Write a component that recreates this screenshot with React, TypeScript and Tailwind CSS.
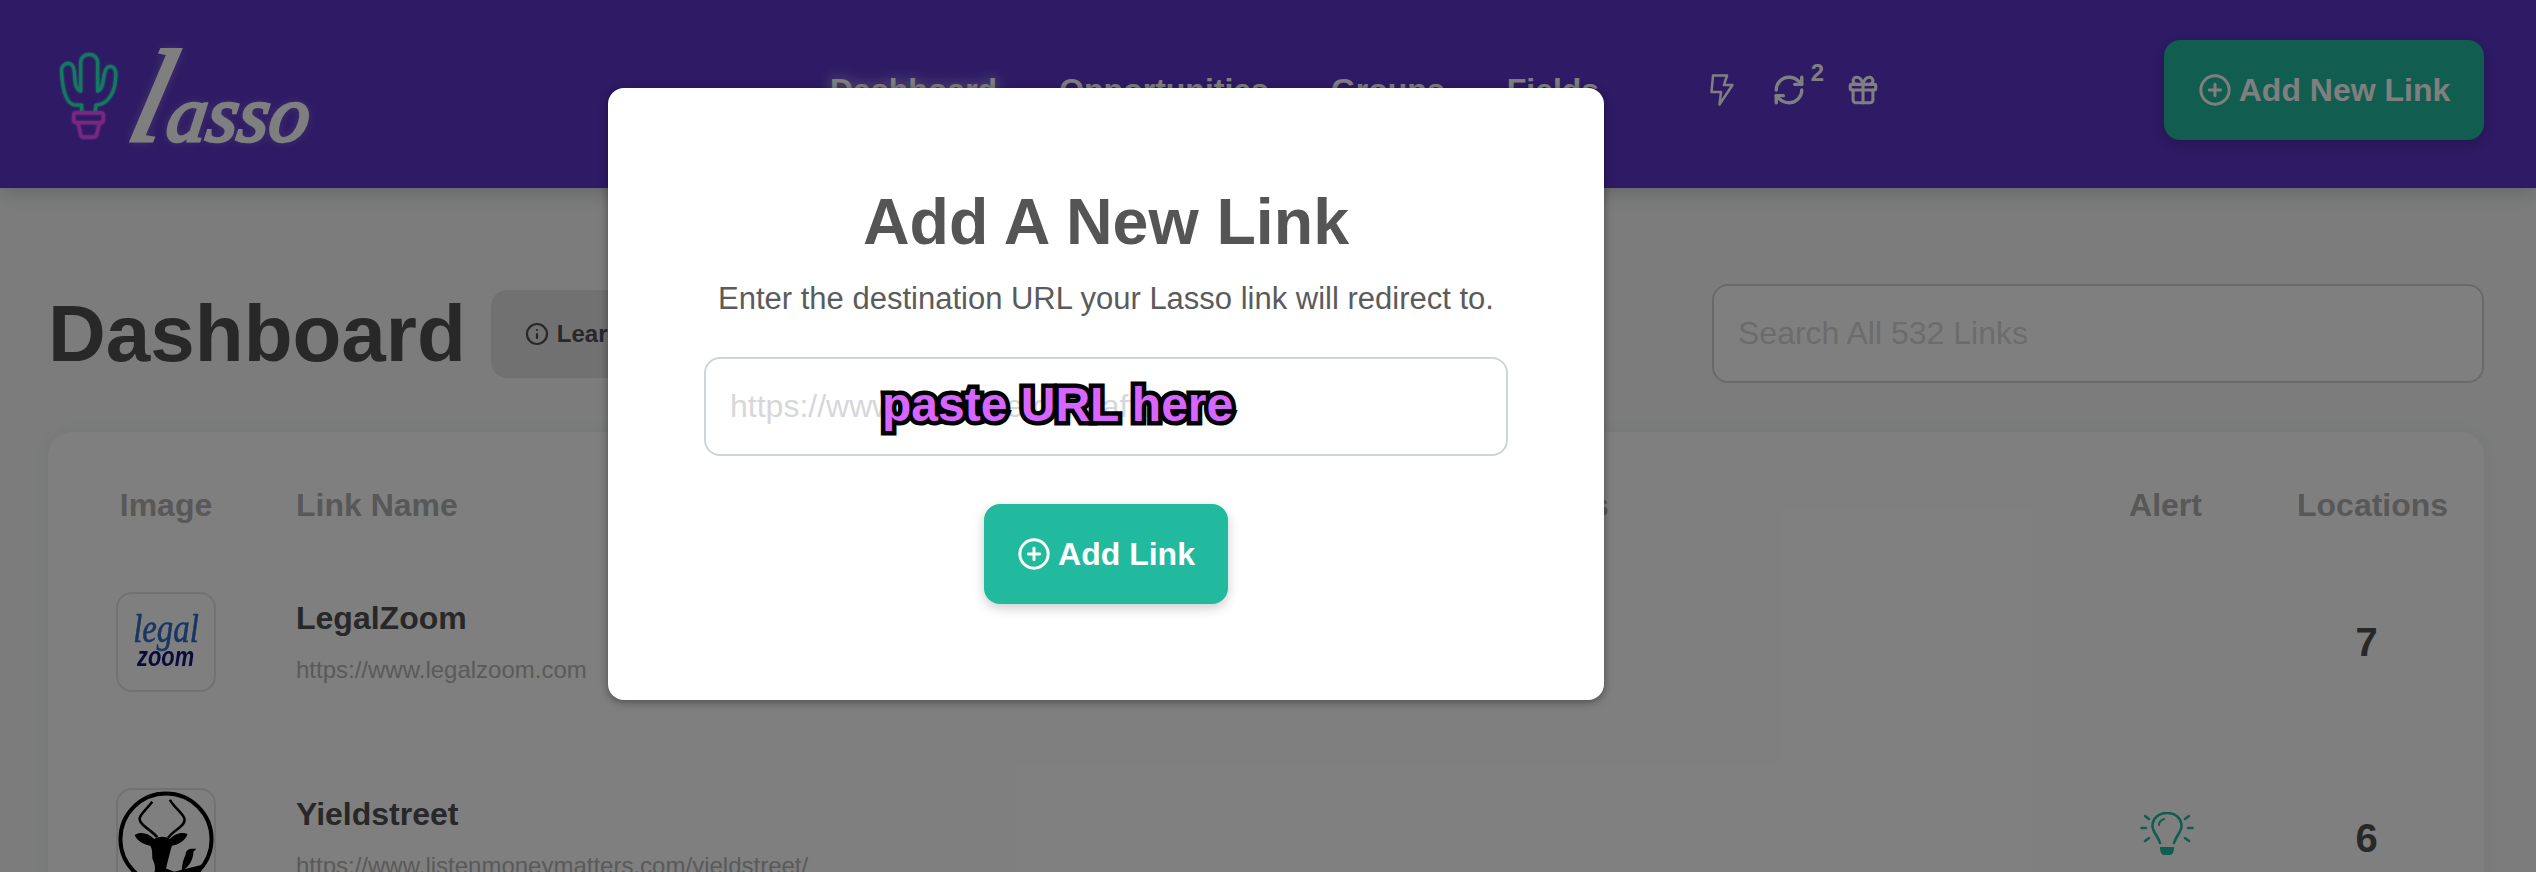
import { CirclePlus, Gift, Info, RefreshCw } from 'lucide-react'

const NAV_ITEMS = ['Dashboard', 'Opportunities', 'Groups', 'Fields']

function Cactus() {
  return (
    <svg width="60" height="90" viewBox="84 70 188 280" fill="none" strokeLinecap="round" strokeLinejoin="round" strokeWidth="10" className="shrink-0">
      <g className="drop-shadow-[0_0_4px_#2bf5c4]" stroke="#2bf0c0">
        <path d="M155 258 L155 235 L132 235 C108 230 95 190 92 130 C90 100 130 92 132 130 L135 165 C137 185 150 192 152 192 L152 102 C152 68 205 68 205 102 L205 192 C225 185 222 145 228 132 C235 105 262 110 262 140 C262 190 240 235 200 235 L197 258" />
      </g>
      <g className="drop-shadow-[0_0_4px_#f45cff]" stroke="#f050ff">
        <rect x="130" y="260" width="93" height="30" rx="7" />
        <path d="M143 290 L152 328 C153 335 155 336 162 336 L192 336 C198 336 200 335 202 328 L211 290" />
      </g>
    </svg>
  )
}

function Logo() {
  return (
    <div className="flex items-center w-[830px] pl-[59px] pt-[6px]">
      <Cactus />
      <div className="ml-[10px] flex items-baseline h-[100px] font-['Liberation_Serif',serif] italic text-white [text-shadow:0_0_10px_rgba(255,255,255,0.4)]">
        <span className="inline-block -skew-x-[14deg] translate-x-[6px] text-[132px] leading-[100px] [-webkit-text-stroke:3px_white]">l</span>
        <span className="inline-block -skew-x-[8deg] text-[80px] leading-[100px] ml-[2px] [-webkit-text-stroke:3px_white]">asso</span>
      </div>
    </div>
  )
}

function Bolt() {
  return (
    <svg width="24" height="32" viewBox="0 0 24 32" fill="none" stroke="white" strokeWidth="2.5" strokeLinejoin="round">
      <path d="M3 1.5 L17 1.5 L14 11 L22.5 11 L9.5 30.5 L11 18 L1.5 18 Z" />
    </svg>
  )
}

function Bulb() {
  return (
    <svg width="54" height="44" viewBox="0 0 54 44" fill="none" stroke="#22ba9f" strokeLinecap="round" strokeWidth="2.6" className="mb-2">
      <path d="M20 31 C18 24 12.5 20 12.5 14 C12.5 6 19 1 27 1 C35 1 41.5 6 41.5 14 C41.5 20 36 24 34 31" />
      <path d="M19 13 C19 10 21 8 24 7" strokeWidth="2" />
      <path d="M20 35 L34 35 C34 39 33 43 30 43 L24 43 C21 43 20 39 20 35 Z" fill="#22ba9f" stroke="none" />
      <path d="M5 4 L9 7" />
      <path d="M49 4 L45 7" />
      <path d="M1.5 16 L6 16" />
      <path d="M48 16 L52.5 16" />
      <path d="M5 29 L9 26" />
      <path d="M49 29 L45 26" />
    </svg>
  )
}

function LegalZoomLogo() {
  return (
    <div className="flex flex-col items-center pt-[18px]">
      <span className="font-['Liberation_Serif',serif] italic text-[#2f6fc4] text-[40px] leading-[34px] scale-x-[0.82] [-webkit-text-stroke:0.6px_#2f6fc4]">legal</span>
      <span className="italic font-bold text-[#14147a] text-[28px] leading-[20px] mt-[1px] scale-x-[0.78]">zoom</span>
    </div>
  )
}

function AntelopeLogo() {
  return (
    <svg width="100" height="100" viewBox="0 0 100 100" className="-m-px">
      <circle cx="50" cy="50" r="46.5" fill="none" stroke="black" strokeWidth="4" />
      <path d="M36 12 C30 20 24 24 23 29 C23 36 34 40 41 48" fill="none" stroke="black" strokeWidth="2.6" />
      <path d="M54 10 C58 18 68 24 69 30 C69 38 58 40 52 49" fill="none" stroke="black" strokeWidth="2.6" />
      <path d="M18 46 C24 42 32 44 38 50 C42 47 50 47 54 50 C58 45 66 42 72 45 C70 52 62 56 56 57 C54 64 52 72 50 80 L60 84 L38 84 C40 80 38 74 36 70 C36 64 36 60 34 57 C28 56 20 52 18 46 Z" fill="black" />
      <path d="M70 66 C70 62 73 60 77 60 L81 60 L78 63 C78 68 76 74 72 78 L66 84 C66 76 68 70 70 66 Z" fill="black" />
      <path d="M56 84 L88 76 L80 100 L50 100 Z" fill="black" />
    </svg>
  )
}

const ROWS = [
  { name: 'LegalZoom', url: 'https://www.legalzoom.com', locations: 7, alert: false, logo: <LegalZoomLogo /> },
  { name: 'Yieldstreet', url: 'https://www.listenmoneymatters.com/yieldstreet/', locations: 6, alert: true, logo: <AntelopeLogo /> },
]

export default function App() {
  return (
    <div className="relative h-[872px] overflow-hidden bg-[#f8f9fa] font-['Liberation_Sans',Arial,sans-serif]">
      {/* Header */}
      <header className="relative z-10 flex items-center h-[188px] pr-[52px] bg-[#5c35ca] shadow-[0_4px_20px_rgba(0,0,0,0.2)]">
        <Logo />
        <nav className="flex gap-[62px] text-[32px] leading-[37px] font-bold text-white -mt-[8px]">
          {NAV_ITEMS.map((item, i) => (
            <span key={item} className={i === 0 ? '[text-shadow:0_0_14px_rgba(255,255,255,0.8)]' : ''}>{item}</span>
          ))}
        </nav>
        <div className="flex items-center ml-[111px] -mt-[8px] text-white">
          <Bolt />
          <div className="relative ml-[38px]">
            <RefreshCw size={34} strokeWidth={2.4} />
            <span className="absolute -top-[14px] -right-[18px] text-[24px] leading-[28px] font-bold">2</span>
          </div>
          <Gift size={34} strokeWidth={2.2} className="ml-[40px]" />
        </div>
        <button className="ml-auto flex items-center gap-[7px] w-[320px] h-[100px] justify-center -mt-[8px] rounded-2xl bg-[#22ba9f] text-white text-[32px] font-bold shadow-[0_4px_12px_rgba(0,0,0,0.2)]">
          <CirclePlus size={34} strokeWidth={2.1} />
          Add New Link
        </button>
      </header>

      {/* Dashboard */}
      <main className="pl-[48px] pr-[52px]">
        <div className="flex items-center h-[99px] mt-[96px]">
          <h1 className="text-[80px] leading-[90px] font-bold text-[#505050]">Dashboard</h1>
          <button className="flex items-center gap-[8px] h-[88px] ml-[25px] px-[34px] rounded-2xl bg-[#e2e2e2] text-[#505050] text-[24px] font-bold">
            <Info size={24} strokeWidth={2.2} />
            Learn More
          </button>
          <input
            type="text"
            placeholder="Search All 532 Links"
            className="ml-auto w-[772px] h-[99px] px-[24px] rounded-2xl border-2 border-[#ced4da] bg-white text-[32px] placeholder:text-[#d8d8d8] outline-none"
          />
        </div>

        <section className="mt-[49px] pt-[55px] pl-[68px] pr-[38px] h-[600px] rounded-3xl bg-white shadow-[0_0_20px_rgba(0,0,0,0.06)]">
          <div className="grid grid-cols-[100px_1119px_114px_1fr_106px_149px] gap-x-20 text-[32px] leading-[37px] font-bold text-[#b0b0b0]">
            <span className="text-center">Image</span>
            <span>Link Name</span>
            <span>Groups</span>
            <span />
            <span className="text-center pl-[3px]">Alert</span>
            <span>Locations</span>
          </div>
          <div className="flex flex-col gap-y-[96px] mt-[68px]">
            {ROWS.map(row => (
              <div key={row.name} className="grid grid-cols-[100px_1119px_114px_1fr_106px_149px] gap-x-20 items-center h-[100px]">
                <div className="w-[100px] h-[100px] rounded-2xl border-2 border-[#e4e4e4] flex justify-center">{row.logo}</div>
                <div className="self-start pt-[8px]">
                  <div className="text-[32px] leading-[37px] font-bold text-[#505050]">{row.name}</div>
                  <div className="mt-[19px] text-[24px] leading-[28px] text-[#b4b4b4]">{row.url}</div>
                </div>
                <span />
                <span />
                <div className="flex justify-center pl-[6px]">{row.alert && <Bulb />}</div>
                <div className="text-center pr-[10px] text-[40px] leading-[46px] font-bold text-[#505050]">{row.locations}</div>
              </div>
            ))}
          </div>
        </section>
      </main>

      {/* Modal */}
      <div className="absolute inset-0 z-20 flex items-start pl-[608px] pt-[88px] bg-black/50">
        <div className="flex flex-col items-center w-[996px] h-[612px] pt-[97px] rounded-2xl bg-white shadow-[0_2px_8px_rgba(0,0,0,0.4)]">
          <h2 className="text-[64.5px] leading-[74px] font-bold text-[#555555]">Add A New Link</h2>
          <p className="mt-[22px] text-[31px] leading-[36px] text-[#5b5b5b]">Enter the destination URL your Lasso link will redirect to.</p>
          <div className="relative mt-[40px]">
            <input
              type="text"
              placeholder="https://www.example.com/affiliate"
              className="w-[804px] h-[99px] px-[24px] rounded-2xl border-2 border-[#ced4da] bg-white text-[32px] placeholder:text-[#d6d7d9] outline-none"
            />
            <span className="absolute left-[178px] top-[20px] text-[48px] leading-[56px] font-bold whitespace-nowrap text-[#d666ff] [-webkit-text-stroke:9px_black] [paint-order:stroke_fill] [text-shadow:1px_2px_2px_#000]">
              paste URL here
            </span>
          </div>
          <button className="flex items-center justify-center gap-[7px] mt-[48px] w-[244px] h-[100px] rounded-2xl bg-[#22ba9f] text-white text-[32px] font-bold shadow-[0_4px_12px_rgba(0,0,0,0.2)]">
            <CirclePlus size={34} strokeWidth={2.1} />
            Add Link
          </button>
        </div>
      </div>
    </div>
  )
}
